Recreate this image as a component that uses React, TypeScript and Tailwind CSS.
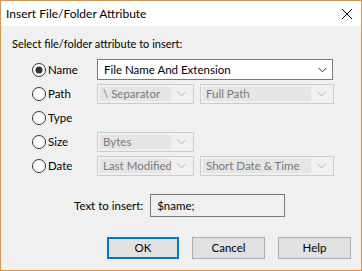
import React from "react";

const font = { fontFamily: 'Lato, "Segoe UI", sans-serif' };

function Chevron({ color }: { color: string }) {
  return (
    <svg width="9" height="6" viewBox="0 0 9 6">
      <path d="M0.5 0.8 L4.5 4.8 L8.5 0.8" fill="none" stroke={color} strokeWidth="1" />
    </svg>
  );
}

function Radio({ checked }: { checked?: boolean }) {
  return (
    <svg width="14" height="14" viewBox="0 0 14 14">
      <circle cx="7" cy="7" r="6.5" fill="#fff" stroke="#333" strokeWidth="1" />
      {checked && <circle cx="7" cy="7" r="3.5" fill="#333" />}
    </svg>
  );
}

function DisabledCombo({ text, w }: { text: string; w: string }) {
  return (
    <div className={`${w} h-[20px] border border-[#cccccc] bg-[#f0f0f0] flex items-center p-[2px]`}>
      <div className="flex-1 h-full bg-[#e5e5e5] flex items-center pl-[3px] text-[11.5px] text-[#7a7a7a] whitespace-nowrap overflow-hidden">{text}</div>
      <div className="w-[20px] flex justify-center items-center">
        <Chevron color="#b5b5b5" />
      </div>
    </div>
  );
}

function RadioLabel({ label, checked }: { label: string; checked?: boolean }) {
  return (
    <div className="w-[65px] flex items-center gap-[2px] text-[11.5px] text-black">
      <Radio checked={checked} />
      <span>{label}</span>
    </div>
  );
}

export default function App() {
  return (
    <div
      className="w-[362px] h-[271px] border border-[#d9944d] bg-[#f0f0f0] flex flex-col"
      style={font}
    >
      <div className="h-[25px] bg-white flex items-center justify-between pl-[5px] pr-[8px]">
        <span className="text-[12px] text-black">Insert File/Folder Attribute</span>
        <svg width="12" height="12" viewBox="0 0 12 12">
          <path d="M1 1 L11 11 M11 1 L1 11" stroke="#000" strokeWidth="1" />
        </svg>
      </div>
      <div className="flex flex-col pl-[11px] pt-[10px]">
        <div className="text-[11px] text-black leading-[16px]">Select file/folder attribute to insert:</div>
        <div className="flex flex-col gap-[4px] pl-[20px] mt-[7px]">
          <div className="flex items-center">
            <RadioLabel label="Name" checked />
            <div className="w-[236px] h-[21px] border border-[#7a7a7a] bg-white flex items-center pl-[6px] pr-[5px] justify-between">
              <span className="text-[11.5px] text-black">File Name And Extension</span>
              <Chevron color="#333" />
            </div>
          </div>
          <div className="flex items-center">
            <RadioLabel label="Path" />
            <DisabledCombo text="\ Separator" w="w-[97px]" />
            <div className="w-[6px]" />
            <DisabledCombo text="Full Path" w="w-[134px]" />
          </div>
          <div className="flex items-center h-[20px]">
            <RadioLabel label="Type" />
          </div>
          <div className="flex items-center">
            <RadioLabel label="Size" />
            <DisabledCombo text="Bytes" w="w-[97px]" />
          </div>
          <div className="flex items-center">
            <RadioLabel label="Date" />
            <DisabledCombo text="Last Modified" w="w-[97px]" />
            <div className="w-[6px]" />
            <DisabledCombo text="Short Date & Time" w="w-[134px]" />
          </div>
        </div>
        <div className="flex items-center mt-[18px] pl-[62px] gap-[7px]">
          <span className="text-[11.5px] text-black">Text to insert:</span>
          <div className="w-[135px] h-[23px] border border-[#7a7a7a] bg-[#f0f0f0] flex items-center pl-[6px] text-[11.5px] text-black">
            $name;
          </div>
        </div>
        <div className="flex mt-[20px] pl-[95px] gap-[13px]">
          <div className="w-[72px] h-[22px] border-2 border-[#0078d7] bg-[#e1e1e1] flex items-center justify-center text-[11.5px] text-black">
            OK
          </div>
          <div className="w-[73px] h-[22px] border border-[#adadad] bg-[#e1e1e1] flex items-center justify-center text-[11.5px] text-black">
            Cancel
          </div>
          <div className="w-[73px] h-[22px] border border-[#adadad] bg-[#e1e1e1] flex items-center justify-center text-[11.5px] text-black">
            Help
          </div>
        </div>
      </div>
    </div>
  );
}
